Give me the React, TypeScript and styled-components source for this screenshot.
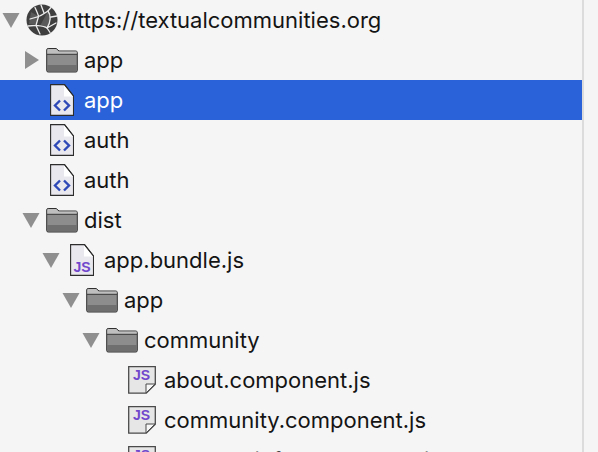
import React from "react";
import styled, { createGlobalStyle } from "styled-components";

const Global = createGlobalStyle`
  html, body { margin: 0; padding: 0; background: #f5f5f5; overflow: hidden; }
  #root { width: 598px; height: 452px; overflow: hidden; }
`;

const Page = styled.div`
  width: 598px;
  height: 452px;
  display: flex;
  overflow: hidden;
  background: #f5f5f5;
`;

const Tree = styled.ul`
  width: 582px;
  height: 452px;
  margin: 0;
  padding: 0;
  list-style: none;
  overflow: hidden;
  flex: none;
  border-right: 2px solid #dcdcdc;
  box-sizing: content-box;
  font-family: Inter, "Liberation Sans", Arial, sans-serif;
  font-size: 22px;
`;

const Row = styled.li<{ $depth: number; $selected?: boolean }>`
  height: 40px;
  display: flex;
  align-items: center;
  padding-left: ${(p) => p.$depth * 20 + 2}px;
  background: ${(p) => (p.$selected ? "#2a63d9" : "transparent")};
  color: ${(p) => (p.$selected ? "#ffffff" : "#141414")};
`;

const ArrowSlot = styled.span`
  width: 24px;
  height: 32px;
  flex: none;
  display: flex;
  align-items: center;
`;

const IconSlot = styled.span`
  width: 32px;
  height: 32px;
  flex: none;
  display: flex;
  align-items: center;
  justify-content: center;
`;

const Label = styled.span`
  margin-left: 6px;
  white-space: nowrap;
`;

const Arrow = ({ open }: { open: boolean }) =>
  open ? (
    <svg width="18" height="18" viewBox="0 0 18 18">
      <path d="M0.500 2h17L9 17z" fill="#8f8f8f" />
    </svg>
  ) : (
    <svg width="18" height="18" viewBox="0 0 18 18">
      <path d="M3 0L17 9 3 18z" fill="#8f8f8f" />
    </svg>
  );

const Globe = () => (
  <svg width="32" height="32" viewBox="0 0 32 32">
    <circle cx="16" cy="16" r="15.500" fill="#3f3f3f" />
    <path d="M5 8l7 4-2 9-7-1zM22 7l3 8-4 9-7-2z" fill="#5a5a5a" />
    <g stroke="#ececec" strokeWidth="1.300" fill="none" strokeLinecap="round">
      <path d="M9 3.500C11 8 12 10 12.500 12.500L4 15M12.500 12.500C16 11.500 19 9 22 7L25 3.500" />
      <path d="M12.500 12.500L10 21.500L2 22M10 21.500L14 30M10 21.500C15 22 18 22 21 24L24 28.500" />
      <path d="M22 7C25 11 25 18 21 24M21 24L30 19M25 13L31 12" />
      <path d="M15 1L18 9" />
    </g>
  </svg>
);

const Folder = () => (
  <svg width="32" height="26" viewBox="0 0 32 26">
    <path
      d="M0.700 3a1.500 1.500 0 0 1 1.500-1.500h8L13 4h16.800A1.500 1.500 0 0 1 31.300 5.500V23.500A1.500 1.500 0 0 1 29.800 25H2.200A1.500 1.500 0 0 1 0.700 23.500z"
      fill="#8d8d8d"
      stroke="#303030"
      strokeWidth="1"
    />
    <path d="M1.300 3a1 1 0 0 1 1-1h7.700l2.700 2.600h18v2.400H1.300z" fill="#bfbfbf" />
    <path d="M1 7.300h30" stroke="#3a3a3a" strokeWidth="1" />
    <path d="M1.200 18h29.600v5.500a1 1 0 0 1-1 1H2.200a1 1 0 0 1-1-1z" fill="#6f6f6f" />
  </svg>
);

const FileShape = ({ fill }: { fill: string }) => (
  <>
    <path d="M0.600 0.600h13.900l9 11.400V31.400H0.600z" fill={fill} stroke="#2c2c2c" strokeWidth="1.100" />
    <path d="M14 1v11.500h9z" fill="#ffffff" />
    <path d="M14.500 0.600l9 11.400" fill="none" stroke="#2c2c2c" strokeWidth="1.100" />
  </>
);

const MarkupFile = () => (
  <svg width="24" height="32" viewBox="0 0 24 32">
    <FileShape fill="#e8e8ee" />
    <path
      d="M10 16.500L5 21.500 10 26.500M14 16.500L19 21.500 14 26.500"
      fill="none"
      stroke="#2f48b8"
      strokeWidth="2.400"
    />
  </svg>
);

const ScriptFile = () => (
  <svg width="24" height="32" viewBox="0 0 24 32">
    <FileShape fill="#e8e8ee" />
    <text x="12" y="27.500" textAnchor="middle" fontFamily="'Liberation Sans', Arial, sans-serif" fontWeight="700" fontSize="14" fill="#7147cc">
      JS
    </text>
  </svg>
);

const ModuleFile = () => (
  <svg width="28" height="28" viewBox="0 0 28 28">
    <path d="M0.700 0.700h26.600v17.500l-9 9H0.700z" fill="#e6e6e6" stroke="#4a4a4a" strokeWidth="1.300" />
    <path d="M27 18h-9v9z" fill="#f7f7f7" stroke="#4a4a4a" strokeWidth="1" strokeLinejoin="round" />
    <text x="13.500" y="14" textAnchor="middle" fontFamily="'Liberation Sans', Arial, sans-serif" fontWeight="700" fontSize="14" fill="#7147cc">
      JS
    </text>
  </svg>
);

type Kind = "globe" | "folder" | "markup" | "script" | "module";
type Node = { label: string; depth: number; kind: Kind; open?: boolean; selected?: boolean };

const rows: Node[] = [
  { label: "https://textualcommunities.org", depth: 0, kind: "globe", open: true },
  { label: "app", depth: 1, kind: "folder", open: false },
  { label: "app", depth: 1, kind: "markup", selected: true },
  { label: "auth", depth: 1, kind: "markup" },
  { label: "auth", depth: 1, kind: "markup" },
  { label: "dist", depth: 1, kind: "folder", open: true },
  { label: "app.bundle.js", depth: 2, kind: "script", open: true },
  { label: "app", depth: 3, kind: "folder", open: true },
  { label: "community", depth: 4, kind: "folder", open: true },
  { label: "about.component.js", depth: 5, kind: "module" },
  { label: "community.component.js", depth: 5, kind: "module" },
  { label: "product-info.component.js", depth: 5, kind: "module" },
];

const icons: Record<Kind, React.FC> = {
  globe: Globe,
  folder: Folder,
  markup: MarkupFile,
  script: ScriptFile,
  module: ModuleFile,
};

export default function App() {
  return (
    <Page>
      <Global />
      <Tree>
        {rows.map((r, i) => {
          const Icon = icons[r.kind];
          return (
            <Row key={i} $depth={r.depth} $selected={r.selected}>
              <ArrowSlot>{r.open !== undefined && <Arrow open={r.open} />}</ArrowSlot>
              <IconSlot>
                <Icon />
              </IconSlot>
              <Label>{r.label}</Label>
            </Row>
          );
        })}
      </Tree>
    </Page>
  );
}
